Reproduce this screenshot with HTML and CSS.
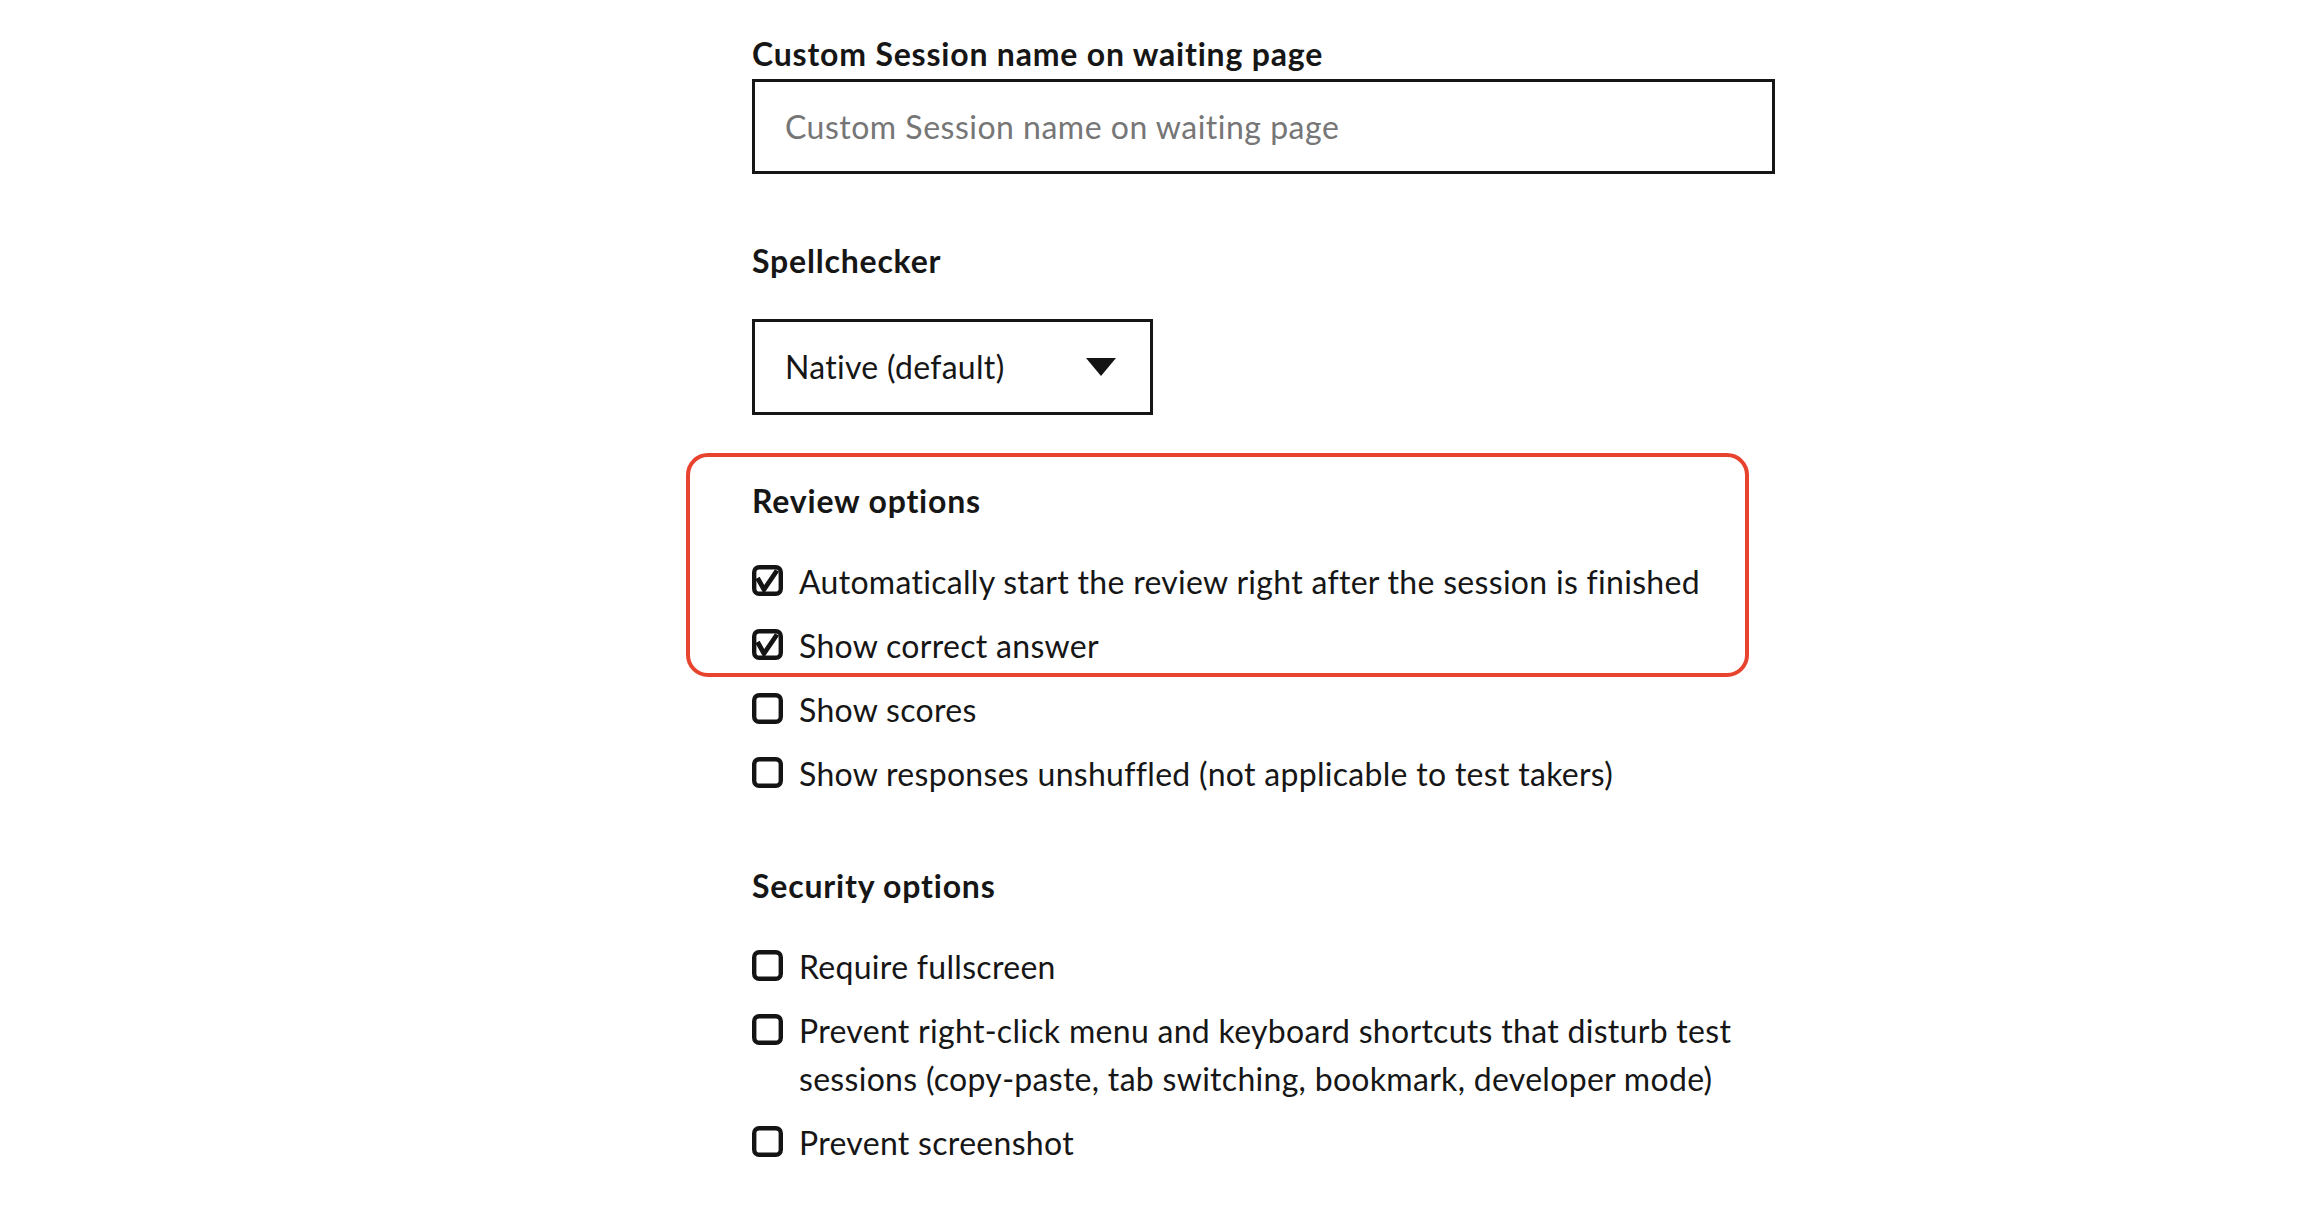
FILE: index.html
```html
<!DOCTYPE html>
<html lang="en">
<head>
<meta charset="utf-8">
<title>Session settings</title>
<link rel="stylesheet" href="styles.css">
</head>
<body>
<main class="form">
  <div class="field">
    <label class="field-label" for="session-name">Custom Session name on waiting page</label>
    <input class="text-input" id="session-name" type="text" placeholder="Custom Session name on waiting page">
  </div>

  <div class="field field-spell">
    <div class="field-label label-spaced">Spellchecker</div>
    <div class="dropdown">
      <span class="dropdown-value">Native (default)</span>
      <svg class="dropdown-arrow" width="30" height="18" viewBox="0 0 30 18"><polygon points="0,0 30,0 15,18" fill="#141414"/></svg>
    </div>
  </div>

  <section class="group group-review">
    <div class="highlight"></div>
    <h3 class="group-title">Review options</h3>
    <ul class="options">
      <li class="option">
        <svg class="check" width="31" height="31" viewBox="0 0 31 31"><rect x="2.2" y="2.2" width="26.6" height="26.6" rx="5" fill="none" stroke="#141414" stroke-width="4.4"/><path d="M5.5 13 L12 24.5 L25 5.5" fill="none" stroke="#141414" stroke-width="4.8" stroke-linejoin="miter"/></svg>
        <span class="option-text">Automatically start the review right after the session is finished</span>
      </li>
      <li class="option">
        <svg class="check" width="31" height="31" viewBox="0 0 31 31"><rect x="2.2" y="2.2" width="26.6" height="26.6" rx="5" fill="none" stroke="#141414" stroke-width="4.4"/><path d="M5.5 13 L12 24.5 L25 5.5" fill="none" stroke="#141414" stroke-width="4.8" stroke-linejoin="miter"/></svg>
        <span class="option-text">Show correct answer</span>
      </li>
      <li class="option">
        <svg class="check" width="31" height="31" viewBox="0 0 31 31"><rect x="2.2" y="2.2" width="26.6" height="26.6" rx="5" fill="none" stroke="#141414" stroke-width="4.4"/></svg>
        <span class="option-text">Show scores</span>
      </li>
      <li class="option">
        <svg class="check" width="31" height="31" viewBox="0 0 31 31"><rect x="2.2" y="2.2" width="26.6" height="26.6" rx="5" fill="none" stroke="#141414" stroke-width="4.4"/></svg>
        <span class="option-text">Show responses unshuffled (not applicable to test takers)</span>
      </li>
    </ul>
  </section>

  <section class="group group-security">
    <h3 class="group-title">Security options</h3>
    <ul class="options">
      <li class="option">
        <svg class="check" width="31" height="31" viewBox="0 0 31 31"><rect x="2.2" y="2.2" width="26.6" height="26.6" rx="5" fill="none" stroke="#141414" stroke-width="4.4"/></svg>
        <span class="option-text">Require fullscreen</span>
      </li>
      <li class="option">
        <svg class="check" width="31" height="31" viewBox="0 0 31 31"><rect x="2.2" y="2.2" width="26.6" height="26.6" rx="5" fill="none" stroke="#141414" stroke-width="4.4"/></svg>
        <span class="option-text">Prevent right-click menu and keyboard shortcuts that disturb test<br>sessions (copy-paste, tab switching, bookmark, developer mode)</span>
      </li>
      <li class="option">
        <svg class="check" width="31" height="31" viewBox="0 0 31 31"><rect x="2.2" y="2.2" width="26.6" height="26.6" rx="5" fill="none" stroke="#141414" stroke-width="4.4"/></svg>
        <span class="option-text">Prevent screenshot</span>
      </li>
    </ul>
  </section>
</main>
</body>
</html>
```
FILE: styles.css
```css
html, body {
  margin: 0;
  padding: 0;
  background: #ffffff;
}

body {
  font-family: Lato, "Noto Sans", "Liberation Sans", sans-serif;
  font-size: 32px;
  line-height: 48px;
  letter-spacing: 0.3px;
  color: #161616;
}

.form {
  padding: 30px 0 0 752px;
  width: 1064px;
}

.field {
  display: flex;
  flex-direction: column;
  align-items: flex-start;
}

.field-label {
  font-weight: 700;
  letter-spacing: 0.8px;
  margin-bottom: 1px;
}

.label-spaced {
  margin-bottom: 34px;
}

.field-spell {
  margin-top: 63px;
}

.text-input {
  box-sizing: border-box;
  width: 1023px;
  height: 95px;
  border: 3px solid #161616;
  border-radius: 0;
  padding: 0 30px;
  margin: 0;
  font-family: inherit;
  font-size: 32px;
  line-height: 48px;
  letter-spacing: 0.5px;
  color: #161616;
  background: #fff;
  outline: none;
}

.text-input::placeholder {
  color: #767676;
  opacity: 1;
}

.dropdown {
  box-sizing: border-box;
  width: 401px;
  height: 96px;
  border: 3px solid #161616;
  padding: 0 34px 0 30px;
  display: flex;
  align-items: center;
  justify-content: space-between;
}

.dropdown-arrow {
  display: block;
}

.group {
  position: relative;
  margin-top: 62px;
}

.group-security {
  margin-top: 64px;
}

.group-title {
  margin: 0 0 33px;
  font-size: 32px;
  font-weight: 700;
  line-height: 48px;
  letter-spacing: 0.8px;
}

.group-security .group-title {
  margin-bottom: 33px;
}

.options {
  list-style: none;
  margin: 0;
  padding: 0;
  display: flex;
  flex-direction: column;
  gap: 16px;
}

.option {
  display: flex;
  align-items: flex-start;
  gap: 16px;
}

.check {
  flex: none;
  display: block;
  margin-top: 7px;
}

.option-text {
  white-space: nowrap;
}

.highlight {
  position: absolute;
  left: -66px;
  top: -24px;
  width: 1063px;
  height: 224px;
  box-sizing: border-box;
  border: 4px solid #e8432e;
  border-radius: 22px;
  pointer-events: none;
}
```
